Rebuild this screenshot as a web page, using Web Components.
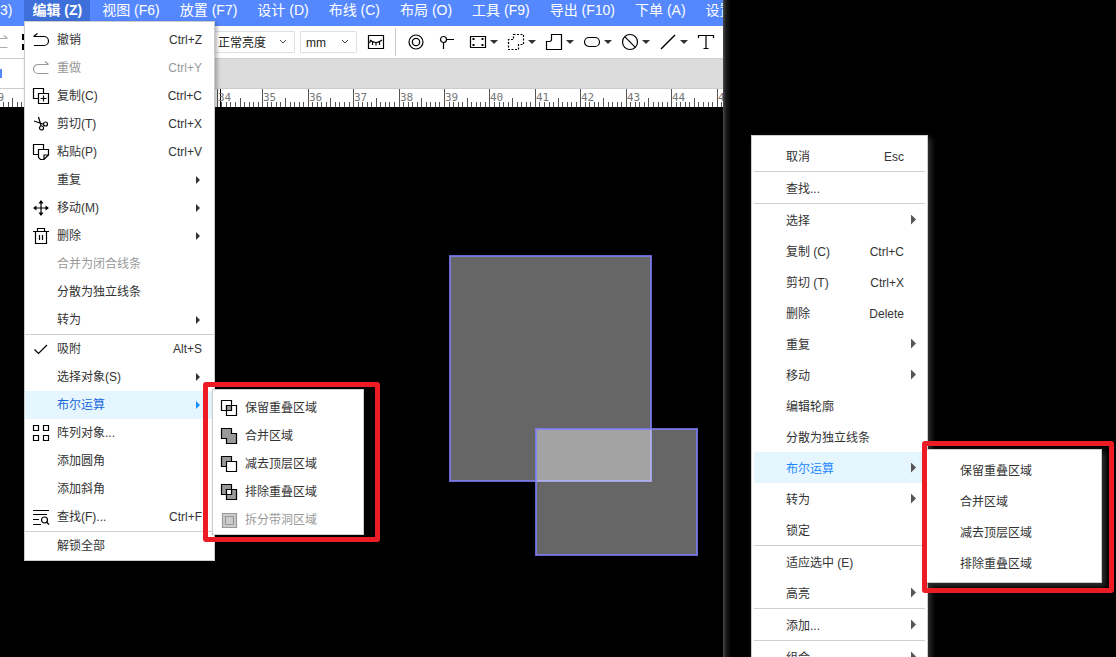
<!DOCTYPE html>
<html lang="zh-CN">
<head>
<meta charset="utf-8">
<title>PCB Editor</title>
<style>
html, body { margin: 0; height: 100%; background: #000; overflow: hidden; }
body { font: 12px/20px "Liberation Sans", "Noto Sans CJK SC", sans-serif; color: #333; }
</style>
</head>
<body>
<pcb-app></pcb-app>

<script>
const define = (name, css, html, setup) => {
  const tpl = document.createElement('template');
  tpl.innerHTML = `<style>*,*::before,*::after{box-sizing:border-box}${css}</style>${html}`;
  customElements.define(name, class extends HTMLElement {
    constructor() {
      super();
      this.attachShadow({ mode: 'open' }).append(tpl.content.cloneNode(true));
    }
    connectedCallback() {
      if (setup && !this.ready) { this.ready = true; setup(this, this.shadowRoot); }
    }
  });
};

const ICONS = {
  undo: '<path d="M.5 4.5H11a4.500 4.500 0 0 1 0 9H1M.5 4.500l4-3"/>',
  redo: '<path d="M15.500 4.500H5a4.500 4.500 0 0 0 0 9h10.500M12 1.500l3.500 3"/>',
  copy: '<path d="M5.500 10.500h-5V.5h10v5M5.500 5.500h10v10h-10zM10.500 7.500v6M7.500 10.500h6"/>',
  cut: '<path d="M1 5l9.700 3.300M5.500 1l2.600 9"/><circle cx="12.500" cy="8" r="2"/><circle cx="8.500" cy="12" r="2"/>',
  paste: '<path d="M5.500 10.500h-5V.5h10v5M5.500 5.500h10v5.500l-4.500 4.500H7.500l-2-2zM15.500 11H11v4.500"/>',
  move: '<path d="M8 1v14M1 8h14"/><path fill="currentColor" stroke="none" d="M8 0l2.500 3.500h-5zM8 16l2.500-3.500h-5zM0 8l3.500-2.500v5zM16 8l-3.500-2.500v5z"/>',
  trash: '<path d="M0 3.500h16M4.500 3.500V.5h7v3M2.500 3.500v12h11v-12M6.500 7v5M9.500 7v5"/>',
  check: '<path d="M1.500 8.500l4 4L14 4"/>',
  array: '<path d="M.5.5h5v5h-5zM10.500.5h5v5h-5zM.5 10.500h5v5h-5zM10.500 10.500h5v5h-5z"/>',
  find: '<path d="M0 1.500h16M0 5.500h14M0 10.500h6M0 15.500h8"/><circle cx="11.500" cy="11" r="3"/><path d="M13.500 13l2.500 2.500"/>',
  intersect: '<path fill="#fff" d="M.5.5h10v10H.5z"/><path fill="#fff" d="M5.500 5.500h10v10h-10z"/><path fill="#999" d="M5.500 5.500h5v5h-5z"/>',
  union: '<path fill="#999" d="M.5.5h10v5h5v10h-10v-5h-5z"/>',
  subtract: '<path fill="#999" d="M.5.5h10v10H.5z"/><path fill="#fff" d="M5.500 5.500h10v10h-10z"/>',
  exclude: '<path fill="#999" d="M.5.5h10v10H.5zM5.500 5.500h10v10h-10z"/><path fill="#fff" d="M5.500 5.500h5v5h-5z"/>',
  split: '<path fill="#ccc" d="M1.500 1.500h14v14h-14z"/><path d="M4.500 4.500h8v8h-8z"/>',
  measure: '<path d="M.5 1.500h15v13H.5z"/><path d="M2 6q6 5 12 0M4.500 8v3M8 8.500v3M11.500 8v3M2.500 7l-1 2"/>',
  via: '<circle cx="8" cy="8" r="7"/><circle cx="8" cy="8" r="3.700"/>',
  pin: '<circle cx="4.500" cy="5.500" r="3"/><path d="M7.500 5.500H15M4.500 8.500V15"/>',
  region: '<path d="M.5 2.500h15v11H.5z"/><path d="M2.500 5h2M11.500 5h2M2.500 11h2M11.500 11h2" stroke-width="2"/>',
  dashed: '<path stroke-dasharray="2 1.500" d="M5.500.5h10v10h-5v5H.5v-10h5z"/>',
  poly: '<path d="M5.500.5h10v15H.5v-8h3a2 2 0 0 0 2-2z"/>',
  slot: '<rect x=".5" y="3.500" width="15" height="9" rx="4.500"/>',
  forbid: '<circle cx="8" cy="8" r="7.500"/><path d="M2.700 2.700l10.600 10.600"/>',
  line: '<path d="M1 15L15 1" stroke-width="1.500"/>',
  text: '<path d="M.5 4V1.500h15V4M8 1.500v13M5.500 14.500h5"/>',
  frame: '<path d="M5 1H2v5M2 10v5h3" stroke-width="2"/>'
};

define('ui-icon',
  `:host{display:block;flex:none;width:16px;height:16px}
   svg{display:block;width:16px;height:16px;overflow:visible;fill:none;stroke:currentColor;stroke-width:1.2}`,
  `<svg viewBox="0 0 16 16" aria-hidden="true"></svg>`,
  (el, root) => { root.querySelector('svg').innerHTML = ICONS[el.getAttribute('name')] || ''; });

/* top menu bar */
define('menu-tab',
  `:host{display:block;flex:none}
   button{display:block;height:22px;margin:0 2px;padding:0 8px 2px;border:0;background:none;color:#fff;font:inherit;font-size:14px;line-height:20px;white-space:nowrap}
   :host([active]) button{background:#3f6fd9;font-weight:700}
   :host([cut]) button{margin-left:0;padding-left:0}`,
  `<button type="button"><slot></slot></button>`);

define('menu-bar',
  `:host{display:flex;height:26px;background:#5588ff;overflow:hidden}`,
  `<slot></slot>`);

/* toolbar */
define('tool-button',
  `:host{display:block;flex:none}
   button{display:flex;align-items:center;gap:4px;margin:0;padding:0;border:0;background:none;color:#000;font:inherit}
   i{display:none;border:4px solid transparent;border-top:4px solid #333;border-bottom:0}
   :host([menu]) i{display:block}
   :host([muted]) button{color:#aaa}`,
  `<button type="button"><ui-icon></ui-icon><i></i></button>`,
  (el, root) => {
    const icon = document.createElement('ui-icon');
    icon.setAttribute('name', el.getAttribute('icon'));
    root.querySelector('ui-icon').replaceWith(icon);
    root.querySelector('button').setAttribute('aria-label', el.getAttribute('icon'));
  });

define('tool-select',
  `:host{display:block;flex:none;position:relative}
   select{display:block;appearance:none;width:100%;height:22px;margin:0;padding:2px 20px 0 var(--pad,5px);border:1px solid #dcdfe6;border-radius:1px;background:#fff;color:#222;font:inherit;line-height:18px}
   svg{position:absolute;right:8px;top:8px;width:8px;height:6px;fill:none;stroke:#444;pointer-events:none}`,
  `<select></select><svg viewBox="0 0 8 6"><path d="M1 1l3 3 3-3"/></svg>`,
  (el, root) => {
    const s = root.querySelector('select');
    s.add(new Option(el.getAttribute('value')));
    s.setAttribute('aria-label', el.getAttribute('label'));
  });

define('tool-bar',
  `:host{display:flex;align-items:center;height:33px;background:#fff;border-bottom:1px solid #ccc;overflow:hidden}
   .start{display:flex;gap:13px;width:206px;margin-left:-8px;flex:none}
   .selects{display:flex;gap:5px;flex:none;margin-left:8px}
   .wide{width:89px;--pad:11px}
   .unit{width:57px}
   .single{display:flex;margin-left:11px}
   .rule{width:1px;height:28px;margin:0 12px 0 11px;background:#ccc;flex:none}
   .tools{display:flex;gap:10px}
   .plain{display:flex;gap:15px;margin-right:5px}`,
  `<div class="start"><tool-button icon="redo" muted></tool-button><tool-button icon="frame"></tool-button></div>
   <div class="selects"><tool-select class="wide" label="亮度" value="正常亮度"></tool-select><tool-select class="unit" label="单位" value="mm"></tool-select></div>
   <div class="single"><tool-button icon="measure"></tool-button></div>
   <div class="rule"></div>
   <div class="tools">
     <div class="plain"><tool-button icon="via"></tool-button><tool-button icon="pin"></tool-button></div>
     <tool-button icon="region" menu></tool-button><tool-button icon="dashed" menu></tool-button>
     <tool-button icon="poly" menu></tool-button><tool-button icon="slot" menu></tool-button>
     <tool-button icon="forbid" menu></tool-button><tool-button icon="line" menu></tool-button>
     <tool-button icon="text"></tool-button>
   </div>`);

define('tab-strip',
  `:host{display:flex;height:30px;background:#dcdcdc;border-bottom:1px solid #ccc}
   div{width:160px;background:#fff}
   span{display:block;width:2px;height:9px;margin-top:10px;background:#5588ff}`,
  `<div><span></span></div>`);

define('ruler-strip',
  `:host{display:block;height:18px;background:#fff;overflow:hidden}
   svg{display:block;width:100%;height:18px}
   path{stroke:#555;fill:none;shape-rendering:crispEdges}
   .cursor{stroke:#000}
   text{font:11px "DejaVu Sans Mono",monospace;fill:#777}`,
  `<svg></svg>`,
  (el, root) => {
    const step = 45.44, origin = 217.3 - 34 * step;
    let d = '', labels = '';
    for (let n = 29; n < 46; n++) {
      for (let k = 0; k < 10; k++) {
        const x = Math.floor(origin + (n + k / 10) * step) + .5;
        d += `M${x} 18v-${k === 0 ? 18 : k === 5 ? 9 : 5}`;
      }
      if (n === 29 || n > 33) labels += `<text x="${Math.floor(origin + n * step) + 1}" y="12">${n}</text>`;
    }
    root.querySelector('svg').innerHTML = `<path d="${d}"/><path class="cursor" d="M220.5 0v18"/>${labels}`;
  });

/* drawing surface with two overlapping regions */
define('board-canvas',
  `:host{display:block;flex:1;min-height:0;background:#000;overflow:hidden}
   svg{display:block;width:100%;height:100%}
   rect{fill:#fff;fill-opacity:.4;stroke:#8080ff;stroke-opacity:.8;stroke-width:2}`,
  `<svg aria-label="board"><rect x="450" y="149" width="201" height="225"/><rect x="536" y="322" width="161" height="126"/></svg>`);

/* menus */
define('menu-item',
  `:host{display:block;position:relative}
   button{display:flex;align-items:center;width:100%;height:28px;margin:0;padding:0 12px 0 8px;border:0;background:none;color:inherit;font:inherit;text-align:left;white-space:nowrap}
   .icon{width:16px;margin-right:8px;flex:none;color:#000}
   .label{flex:1}
   i{display:none;width:4px;height:8px;margin-right:2px;background:#333;clip-path:polygon(0 0,100% 50%,0 100%);flex:none}
   :host([more]) i{display:block}
   :host([disabled]) button,:host([disabled]) .icon{color:#999}
   :host([active]) button{background:#e6f6ff;color:#1668dc}
   :host([active]) i{background:#1890ff}`,
  `<button type="button" role="menuitem"><span class="icon"></span><span class="label"><slot></slot></span><span class="key"></span><i></i></button><slot name="sub"></slot>`,
  (el, root) => {
    if (el.hasAttribute('icon')) {
      const icon = document.createElement('ui-icon');
      icon.setAttribute('name', el.getAttribute('icon'));
      root.querySelector('.icon').append(icon);
    }
    root.querySelector('.key').textContent = el.getAttribute('key') || '';
    root.querySelector('button').disabled = el.hasAttribute('disabled');
  });

define('context-item',
  `:host{display:block;position:relative}
   button{display:flex;align-items:center;width:100%;height:31px;margin:0;padding:0 9px 0 32px;border:0;background:none;color:inherit;font:inherit;white-space:nowrap}
   .label{flex:1;text-align:left}
   .label,.key{padding-top:2px}
   .tail{width:12px;display:flex;justify-content:flex-end}
   i{display:none;width:5px;height:10px;background:#555;clip-path:polygon(0 0,100% 50%,0 100%)}
   :host([more]) i{display:block}
   :host([active]) button{background:#e6f6ff;color:#1e88ff}`,
  `<button type="button" role="menuitem"><span class="label"><slot></slot></span><span class="key"></span><span class="tail"><i></i></span></button><slot name="sub"></slot>`,
  (el, root) => { root.querySelector('.key').textContent = el.getAttribute('key') || ''; });

define('menu-line', `:host{display:block;height:1px;background:#d0d0d0}`, ``);

define('menu-panel',
  `:host{display:block;background:#fff;border:1px solid #ccc;padding:4px 0 0;box-shadow:2px 2px 4px rgba(0,0,0,.3)}
   :host([context]){padding:4px 2px;box-shadow:3px 3px 6px #333}`,
  `<slot></slot>`);

/* red frame that lies over the submenu it wraps */
define('mark-frame',
  `:host{display:block;position:absolute;z-index:2}
   div{position:absolute;inset:0;border:5px solid #ed1c24;border-radius:3px;pointer-events:none}`,
  `<slot></slot><div></div>`);

define('edit-menu',
  `:host{display:block;position:absolute;left:24px;top:21px;width:191px;z-index:1}
   mark-frame{left:178px;top:-9px;width:177px;height:160px;padding:7px 16px 7px 9px}`,
  `<menu-panel role="menu">
    <menu-item icon="undo" key="Ctrl+Z">撤销</menu-item>
    <menu-item icon="redo" key="Ctrl+Y" disabled>重做</menu-item>
    <menu-item icon="copy" key="Ctrl+C">复制(C)</menu-item>
    <menu-item icon="cut" key="Ctrl+X">剪切(T)</menu-item>
    <menu-item icon="paste" key="Ctrl+V">粘贴(P)</menu-item>
    <menu-item more>重复</menu-item>
    <menu-item icon="move" more>移动(M)</menu-item>
    <menu-item icon="trash" more>删除</menu-item>
    <menu-item disabled>合并为闭合线条</menu-item>
    <menu-item>分散为独立线条</menu-item>
    <menu-item more>转为</menu-item>
    <menu-line></menu-line>
    <menu-item icon="check" key="Alt+S">吸附</menu-item>
    <menu-item more>选择对象(S)</menu-item>
    <menu-item active more>布尔运算
      <mark-frame slot="sub"><menu-panel role="menu">
        <menu-item icon="intersect">保留重叠区域</menu-item>
        <menu-item icon="union">合并区域</menu-item>
        <menu-item icon="subtract">减去顶层区域</menu-item>
        <menu-item icon="exclude">排除重叠区域</menu-item>
        <menu-item icon="split" disabled>拆分带洞区域</menu-item>
      </menu-panel></mark-frame>
    </menu-item>
    <menu-item icon="array">阵列对象...</menu-item>
    <menu-item>添加圆角</menu-item>
    <menu-item>添加斜角</menu-item>
    <menu-item icon="find" key="Ctrl+F">查找(F)...</menu-item>
    <menu-line></menu-line>
    <menu-item>解锁全部</menu-item>
  </menu-panel>`);

define('context-menu',
  `:host{display:block;position:absolute;left:28px;top:135px;width:177px}
   mark-frame{left:168px;top:-11px;width:192px;height:152px;padding:8px 12px 10px 3px}`,
  `<menu-panel context role="menu">
    <context-item key="Esc">取消</context-item><menu-line></menu-line>
    <context-item>查找...</context-item><menu-line></menu-line>
    <context-item more>选择</context-item>
    <context-item key="Ctrl+C">复制 (C)</context-item>
    <context-item key="Ctrl+X">剪切 (T)</context-item>
    <context-item key="Delete">删除</context-item>
    <context-item more>重复</context-item>
    <context-item more>移动</context-item>
    <context-item>编辑轮廓</context-item>
    <context-item>分散为独立线条</context-item>
    <context-item active more>布尔运算
      <mark-frame slot="sub"><menu-panel context role="menu">
        <context-item>保留重叠区域</context-item>
        <context-item>合并区域</context-item>
        <context-item>减去顶层区域</context-item>
        <context-item>排除重叠区域</context-item>
      </menu-panel></mark-frame>
    </context-item>
    <context-item more>转为</context-item>
    <context-item>锁定</context-item><menu-line></menu-line>
    <context-item>适应选中 (E)</context-item>
    <context-item more>高亮</context-item><menu-line></menu-line>
    <context-item more>添加...</context-item><menu-line></menu-line>
    <context-item more>组合</context-item>
  </menu-panel>`);

define('pcb-app',
  `:host{display:flex;height:100vh;overflow:hidden;background:#000}
   main{flex:1;min-width:0;display:flex;flex-direction:column;position:relative}
   .bars{overflow:hidden;flex:none}
   aside{flex:0 0 393px;position:relative;background:linear-gradient(90deg,#4a4a4a,#1c1c1c 3px,#000 8px)}`,
  `<main>
    <div class="bars">
      <menu-bar>
        <menu-tab cut>3)</menu-tab><menu-tab active>编辑 (Z)</menu-tab><menu-tab>视图 (F6)</menu-tab>
        <menu-tab>放置 (F7)</menu-tab><menu-tab>设计 (D)</menu-tab><menu-tab>布线 (C)</menu-tab>
        <menu-tab>布局 (O)</menu-tab><menu-tab>工具 (F9)</menu-tab><menu-tab>导出 (F10)</menu-tab>
        <menu-tab>下单 (A)</menu-tab><menu-tab>设置</menu-tab>
      </menu-bar>
      <tool-bar></tool-bar>
      <tab-strip></tab-strip>
      <ruler-strip></ruler-strip>
    </div>
    <board-canvas></board-canvas>
    <edit-menu></edit-menu>
  </main>
  <aside><context-menu></context-menu></aside>`);
</script>
</body>
</html>
